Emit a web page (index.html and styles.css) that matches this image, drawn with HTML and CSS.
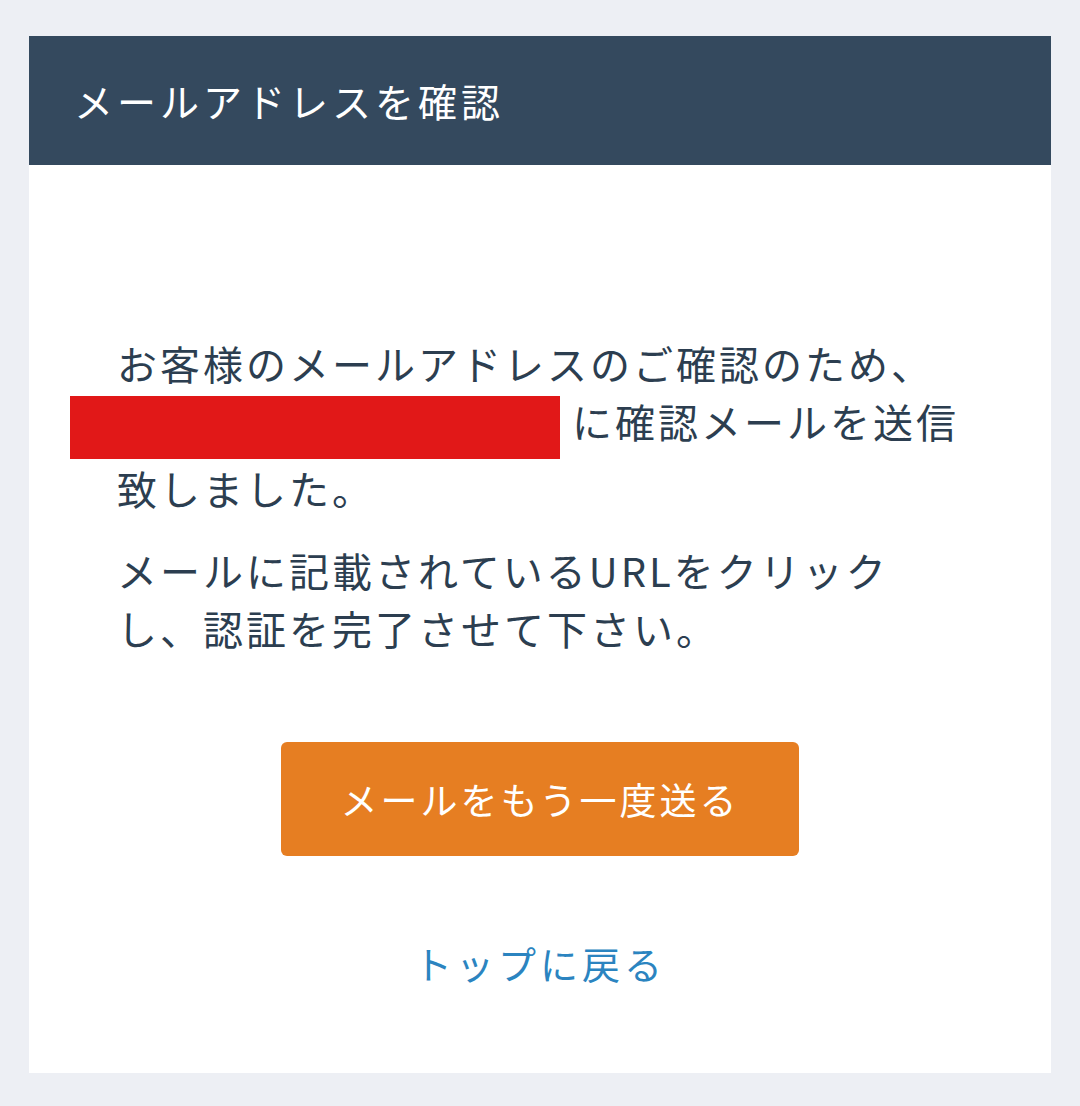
FILE: index.html
```html
<!DOCTYPE html>
<html lang="ja">
<head>
  <meta charset="UTF-8" />
  <meta name="viewport" content="width=device-width, initial-scale=1.0" />
  <title>メールアドレスを確認</title>
  <link rel="stylesheet" href="styles.css">
</head>
<body>

  <!-- === CARD === -->
  <div class="card">
    <div class="card-header">
      <h1>メールアドレスを確認</h1>
    </div>

    <div class="card-body">
      <p class="message">
        お客様のメールアドレスのご確認のため、<br>
        <span class="masked"></span>に確認メールを送信<br>
        致しました。
      </p>
      <p class="message">
        メールに記載されているURLをクリック<br>
        し、認証を完了させて下さい。
      </p>

      <div class="actions">
        <button class="resend-btn" type="button">メールをもう一度送る</button>
        <a class="back-link" href="#">トップに戻る</a>
      </div>
    </div>
  </div>

</body>
</html>
```

FILE: styles.css
```css
* {
  margin: 0;
  padding: 0;
  box-sizing: border-box;
}

html, body {
  background: #edeff4;
  font-family: "Noto Sans CJK JP", "Noto Sans", sans-serif;
}

body {
  padding: 36px 29px 33px;
}

.card {
  background: #fff;
}

.card-header {
  background: #34495e;
  height: 129px;
  display: flex;
  align-items: center;
  padding-left: 45px;
}

.card-header h1 {
  color: #fff;
  font-size: 39px;
  font-weight: 400;
  letter-spacing: 4px;
  line-height: 1;
}

.card-body {
  padding: 169px 88px 81px;
}

.message {
  color: #2c3e50;
  font-size: 40px;
  line-height: 58px;
  letter-spacing: 3px;
  white-space: nowrap;
}

.message + .message {
  margin-top: 24px;
}

/* redacted address */
.masked {
  display: inline-block;
  width: 490px;
  height: 63px;
  margin-left: -47px;
  margin-right: 12px;
  vertical-align: middle;
  background: #e11818;
}

.actions {
  display: flex;
  flex-direction: column;
  align-items: center;
  margin-top: 85px;
}

.resend-btn {
  width: 518px;
  height: 114px;
  border: none;
  border-radius: 6px;
  background: #e67e22;
  color: #fff;
  font-family: inherit;
  font-size: 37px;
  letter-spacing: 3px;
  cursor: pointer;
}

.back-link {
  margin-top: 78px;
  color: #2b84c0;
  font-size: 38px;
  line-height: 58px;
  letter-spacing: 4px;
  text-decoration: none;
}
```
